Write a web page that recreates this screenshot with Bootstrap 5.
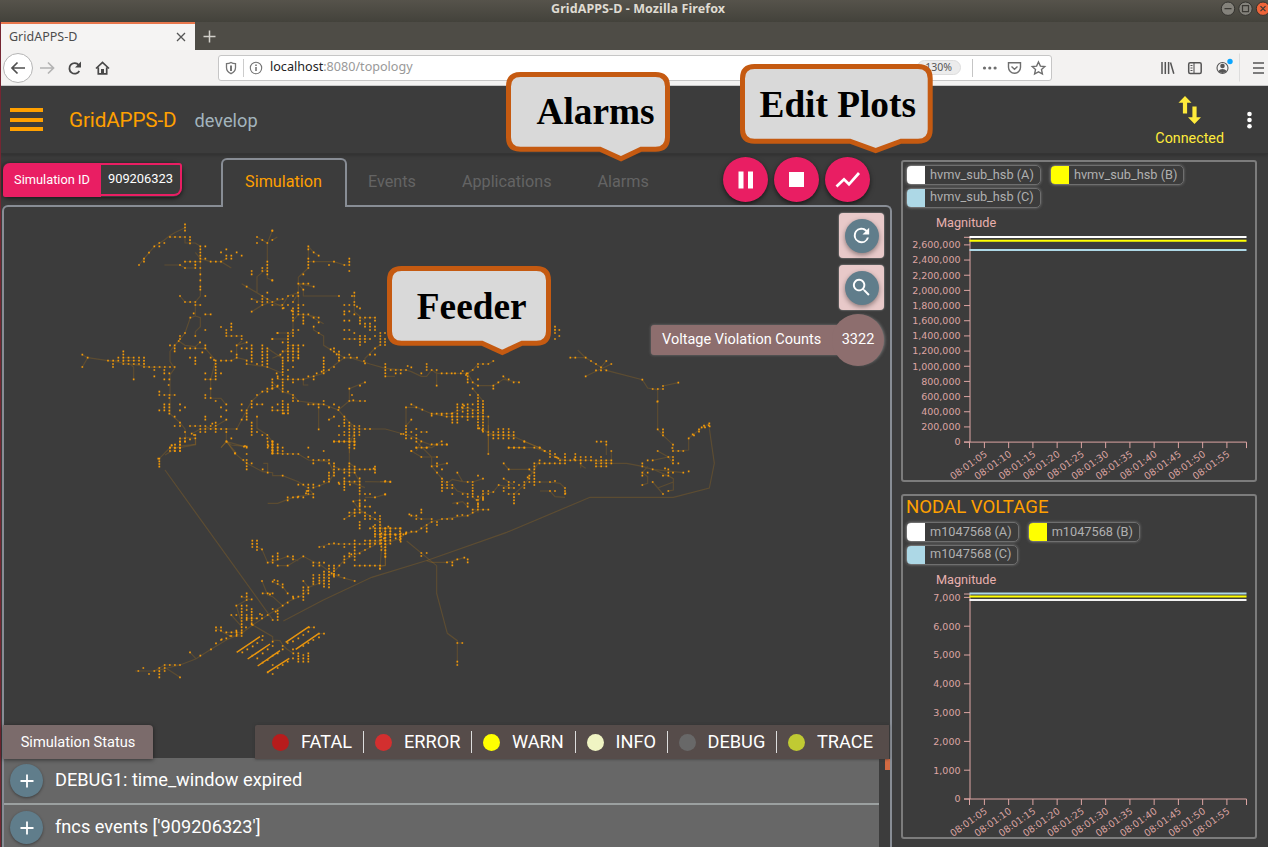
<!DOCTYPE html>
<html lang="en">
<head>
<meta charset="utf-8">
<title>GridAPPS-D</title>
<link rel="stylesheet" href="https://cdn.jsdelivr.net/npm/bootstrap@5.3.0/dist/css/bootstrap.min.css">
<style>
body{width:1268px;height:847px;background:#3c3c3c;font-family:Roboto,sans-serif;color:#fff;line-height:1}
svg{display:block}
.chrome{font-family:"Noto Sans",sans-serif}
.titlebar{height:22px;background:linear-gradient(#56534b,#43423b);font-size:12.5px}
.title-text{left:551px;top:3px;font-weight:700;color:#dfdbd2;letter-spacing:.09px;white-space:nowrap}
.tabbar{height:28px;background:#4e4c46}
.fx-tab{width:194px;height:28px;margin-left:1px;background:#f5f4f3;border-top:2px solid #e8774d;color:#4d4d4d;font-size:12.5px;padding:0 8px}
.toolbar{height:36px;background:#f3f2f1;border-bottom:1px solid #c8c8c8;color:#444}
.back-btn{width:30px;height:30px;border:1px solid #b5b5b5;border-radius:50%;background:#fff}
.urlbar{width:834px;height:26px;background:#fff;border:1px solid #c6c6c6;border-radius:3px;font-size:12.6px}
.zoom-pill{background:#ececec;border:1px solid #ddd;border-radius:8px;font-size:10.5px;height:15px;width:44px;color:#555}
.app-head{height:68px;border-bottom:1px solid #343434;box-shadow:0 1px 4px rgba(0,0,0,.25)}
.burger{height:22.5px;margin-left:10px}
.burger span{display:block;height:4px;width:33px;background:#ffa000}
.brand-name{font-size:20.7px;color:#ffa000;letter-spacing:-.15px;margin-left:26px;padding-top:2px}
.branch{font-size:18.2px;color:#a3b4bd;margin-left:18px;padding-top:3px}
.simid{height:34px;margin:9px 0 0 3px;border-radius:5px 9px 9px 5px;box-shadow:0 1px 5px rgba(0,0,0,.7);font-size:12.8px}
.simid-label{width:98px;background:#e91e63;border-radius:7px 0 0 2px}
.simid-val{width:81px;height:33px;border:2px solid #e91e63;border-left:0;border-radius:0 3px 8px 0;background:#3c3c3c;font-size:12.9px}
.tab-strip{height:51px}
.main-tab{width:126px;height:49px;border:2px solid #888d95;border-bottom:0;border-radius:6px 6px 0 0;background:#3c3c3c;color:#ffa000;left:220.5px;z-index:2;margin-bottom:-2px;padding-bottom:2px}
.tab-item{font-size:16.2px}
.muted-tab{color:#646464}
.fab{width:45px;height:45px;border-radius:50%;background:#e91e63;box-shadow:0 2px 5px rgba(0,0,0,.6)}
.panel-main{width:890px;margin-left:2px;border:2px solid #888d95;border-bottom:0;border-radius:6px 6px 0 0}
.sq{width:45px;height:45px;background:#e8c9c9;border-radius:4px;box-shadow:0 0 2px #aaa}
.sq>span{width:34px;height:34px;border-radius:50%;background:#607d8b;box-shadow:0 2px 5px rgba(0,0,0,.4)}
.vv-label{width:200px;height:30px;background:#8d6e6e;border-radius:3px;font-size:14.5px;box-shadow:0 0 3px #777;padding-left:11px}
.vv-count{width:52px;height:52px;background:#8d6e6e;border-radius:50%;font-size:14.5px;box-shadow:2px 0 3px -1px #777}
.status-tab{width:150px;height:34px;background:#7b6b6b;border-radius:0 4px 0 0;font-size:14.6px;box-shadow:0 1px 4px rgba(0,0,0,.5)}
.legend-bar{width:634px;height:34px;background:#564c4a;font-size:18.2px;padding-left:17px;border-radius:2px 0 0 0;box-shadow:0 0 3px #333}
.lvl{height:22px}
.lvl+.lvl{border-left:1px solid #ddd}
.lvl i{display:block;width:17px;height:17px;border-radius:50%}
.log-list{width:875px;margin-top:-1px;background:#676767;font-size:18.2px;height:90px}
.log-row{height:47px;border-bottom:2px solid #9ba0a0;padding-left:6px}
.log-row span{width:33px;height:33px;border-radius:50%;background:#607d8b;box-shadow:0 1px 3px rgba(0,0,0,.4)}
.plot-card{width:356px;border:2px solid #7c7c7c;border-radius:3px;padding:3px 4px 0 3px}
.chip{height:20px;border:1.5px solid #6f6f6f;border-radius:5px;font-size:12.75px;color:#b0b0b0;overflow:hidden;box-shadow:0 0 3px #777;margin-bottom:2.7px}
.chip i{width:18px;height:20px;margin-right:5px}
.plot-title{font-size:18.6px;color:#ffa000;height:21px;margin-top:-1px}
.axis text{font:9.5px "DejaVu Sans",sans-serif;fill:#dda5a3}
.axis path{stroke:#dda5a3;fill:none;stroke-width:1}
.overlay{left:0;top:0;pointer-events:none}
.callout path{fill:#d9d9d9;stroke:#c55a11;stroke-width:5;stroke-linejoin:miter}
.callout text{font:700 37.3px "Liberation Serif",serif;fill:#000}
</style>
</head>
<body class="overflow-hidden position-relative d-flex flex-column">
<div class="chrome">
 <div class="titlebar position-relative">
  <span class="title-text position-absolute">GridAPPS-D - Mozilla Firefox</span>
  <svg class="position-absolute end-0 top-0" width="50" height="22" viewBox="1218 0 50 22"><g stroke="#33322e"><circle cx="1228" cy="8.700" r="6.700" fill="#84827b"/><circle cx="1245.500" cy="8.700" r="6.700" fill="#84827b"/><circle cx="1263" cy="8.700" r="6.700" fill="#ee6439"/></g><path d="M1224.500 8.700h7M1242.500 5.700h6v6h-6zM1260.500 6.200l5 5m0-5l-5 5" stroke="#3b3934" fill="none" stroke-width="1.200"/></svg>
 </div>
 <div class="tabbar d-flex align-items-center">
  <div class="fx-tab d-flex align-items-center justify-content-between"><span>GridAPPS-D</span><svg width="12" height="12" viewBox="0 0 12 12"><path d="M2 2l8 8m0-8l-8 8" stroke="#555" stroke-width="1.300"/></svg></div>
  <svg class="ms-2" width="13" height="13" viewBox="0 0 13 13"><path d="M6.500.5v12M.5 6.500h12" stroke="#d2d0ca" stroke-width="1.500"/></svg>
 </div>
 <div class="toolbar d-flex align-items-center position-relative">
  <div class="back-btn d-flex align-items-center justify-content-center flex-shrink-0" style="margin-left:3px"><svg width="16" height="14" viewBox="0 0 16 14"><path d="M15 7H2m5.500-5.500L2 7l5.500 5.500" fill="none" stroke="#505050" stroke-width="1.700"/></svg></div>
  <svg width="185" height="34" viewBox="33 51 185 34" fill="none" class="flex-shrink-0"><path d="M40 68h13m-5-5.500l5.500 5.500-5.500 5.500" stroke="#b3b3b3" stroke-width="1.700"/><path d="M79.300 71a5.300 5.300 0 1 1-.5-6" stroke="#484848" stroke-width="1.800"/><path d="M81 61.500v6h-6z" fill="#484848"/><path d="M96 68.500l6.500-6.200 6.500 6.200M98.300 67.500v6.300h8.400v-6.300" stroke="#484848" stroke-width="1.700"/><path d="M101 74v-5h3v5z" fill="#484848"/></svg>
  <div class="urlbar d-flex align-items-center flex-shrink-0">
   <svg width="51" height="24" viewBox="219 56 51 24" fill="none" stroke="#757575" stroke-width="1.300"><path d="M231 62.500c1.500 1 3 1.200 4.500 1.200v4c0 3-2 4.800-4.500 6-2.500-1.200-4.500-3-4.500-6v-4c1.500 0 3-.2 4.500-1.200z"/><path d="M231 65.500v5.500" stroke-width="2"/><path d="M243.500 59v18" stroke="#ccc" stroke-width="1"/><circle cx="256" cy="68" r="5.700" stroke-width="1.100"/><path d="M256 67v4M256 64.500v1.400" stroke-width="1.600"/></svg>
   <span style="color:#222">localhost</span><span style="color:#999">:8080/topology</span>
   <span class="zoom-pill d-flex align-items-center justify-content-end pe-2 ms-auto">130%</span>
   <svg width="90" height="24" viewBox="961 56 90 24" fill="none" stroke="#6e6e6e" stroke-width="1.400"><path d="M972.500 59v18" stroke="#c5c5c5" stroke-width="1"/><g fill="#6e6e6e" stroke="none"><circle cx="984.500" cy="68" r="1.600"/><circle cx="989.800" cy="68" r="1.600"/><circle cx="995.100" cy="68" r="1.600"/></g><path d="M1008.500 62.800h12v4.500a6 6 0 0 1-12 0zM1011.500 66.500l3 2.700 3-2.700"/><path d="M1038.500 62l1.900 4.100 4.400.5-3.300 3 .9 4.400-3.900-2.200-3.900 2.200.9-4.400-3.300-3 4.400-.5z"/></svg>
  </div>
  <svg class="ms-auto" width="110" height="34" viewBox="1158 51 110 34" fill="none" stroke="#555" stroke-width="1.500"><path d="M1162 62v12M1165.300 62v12M1168.600 62v12M1170.500 62.500l3.300 11.300"/><rect x="1188.700" y="62.700" width="12.500" height="10.800" rx="1.500"/><path d="M1194 62v11M1190.500 65.500h2M1190.500 68h2M1190.500 70.500h2" stroke-width="1.100"/><circle cx="1222.500" cy="68" r="5.500" stroke-width="1.100"/><circle cx="1222.500" cy="66" r="2.300" fill="#555" stroke="none"/><path d="M1218.500 71c1.500-2.700 6.500-2.700 8 0-1.500 2.500-6.500 2.500-8 0z" fill="#555" stroke="none"/><circle cx="1230" cy="61.500" r="2.700" fill="#0aa5ff" stroke="none"/><path d="M1239.500 53.500v28" stroke="#ddd" stroke-width="1"/><path d="M1253 63h11M1253 68h11M1253 73h11"/></svg>
 </div>
</div>

<header class="app-head d-flex align-items-center flex-shrink-0">
 <div class="burger d-flex flex-column justify-content-between"><span></span><span></span><span></span></div>
 <div class="brand-name">GridAPPS-D</div>
 <div class="branch">develop</div>
 <div class="ms-auto d-flex flex-column align-items-center" style="color:#ffeb3b;font-size:14.300px;padding-top:2px">
  <svg width="24" height="30" viewBox="1177 96 24 30" fill="#ffeb3b"><path d="M1184 97l6.500 6.700h-4.400v10.700h-4.200v-10.700h-4.400zM1193.500 125l6.500-6.700h-4.400v-10.700h-4.200v10.700h-4.400z"/></svg>
  <span style="margin-top:6px">Connected</span>
 </div>
 <svg width="44" height="30" viewBox="1224 105 44 30" fill="#fff"><circle cx="1249.500" cy="114" r="2.300"/><circle cx="1249.500" cy="120" r="2.300"/><circle cx="1249.500" cy="126.200" r="2.300"/></svg>
</header>

<div class="d-flex flex-grow-1">
 <main class="d-flex flex-column" style="width:892px">
  <div class="tab-strip d-flex position-relative flex-shrink-0">
   <div class="simid d-flex"><div class="simid-label d-flex align-items-center justify-content-center">Simulation ID</div><div class="simid-val d-flex align-items-center justify-content-center">909206323</div></div>
   <div class="main-tab tab-item d-flex align-items-center justify-content-center position-absolute bottom-0">Simulation</div>
   <div class="tab-item muted-tab d-flex align-items-center" style="margin-left:186px;gap:46px;padding-top:5px"><span>Events</span><span>Applications</span><span>Alarms</span></div>
   <div class="d-flex ms-auto" style="gap:6px;margin-right:22px;padding-top:3px">
    <div class="fab d-flex align-items-center justify-content-center"><svg width="16" height="18" viewBox="0 0 16 18"><path d="M.5.5h5v17h-5zM10 .5h5v17h-5z" fill="#fff"/></svg></div>
    <div class="fab d-flex align-items-center justify-content-center"><svg width="16" height="16"><rect width="15" height="15" fill="#fff"/></svg></div>
    <div class="fab d-flex align-items-center justify-content-center"><svg width="26" height="18" viewBox="0 0 26 18"><path d="M1.500 15.500l7.500-7.200 5 5L24 2" stroke="#fff" stroke-width="2.700" fill="none"/></svg></div>
   </div>
  </div>
  <section class="panel-main flex-grow-1 d-flex flex-column position-relative">
   <div class="d-flex flex-column align-items-end" style="height:518px;padding:6px 6px 0;gap:7px">
    <div class="sq d-flex align-items-center justify-content-center"><span class="d-flex align-items-center justify-content-center"><svg width="23" height="23" viewBox="0 0 24 24"><path fill="#fff" d="M17.650 6.350A8 8 0 1 0 19.730 14h-2.080A6 6 0 1 1 12 6c1.660 0 3.140.69 4.220 1.780L13 11h7V4z"/></svg></span></div>
    <div class="sq d-flex align-items-center justify-content-center"><span class="d-flex align-items-center justify-content-center"><svg width="23" height="23" viewBox="0 0 24 24"><path fill="#fff" d="M15.500 14h-.79l-.28-.27A6.500 6.500 0 1 0 13.730 14.430l.27.280v.79l5 4.990L20.490 19zM9.500 14a4.500 4.500 0 1 1 0-9 4.500 4.500 0 0 1 0 9z"/></svg></span></div>
    <div class="d-flex align-items-center" style="margin-top:-3px"><div class="vv-label d-flex align-items-center">Voltage Violation Counts</div><div class="vv-count d-flex align-items-center justify-content-center" style="margin-left:-19px">3322</div></div>
   </div>
   <div class="d-flex justify-content-between" style="margin-left:-1px;padding-right:1px;z-index:1"><div class="status-tab d-flex align-items-center justify-content-center">Simulation Status</div>
    <div class="legend-bar d-flex align-items-center" id="levels"></div></div>
   <div class="d-flex"><div class="log-list">
    <div class="log-row d-flex align-items-center"><span class="d-flex align-items-center justify-content-center"><svg width="14" height="14"><path d="M7 .5v13M.5 7h13" stroke="#fff" stroke-width="1.800"/></svg></span><div style="margin-left:12px">DEBUG1: time_window expired</div></div>
    <div class="log-row d-flex align-items-center"><span class="d-flex align-items-center justify-content-center"><svg width="14" height="14"><path d="M7 .5v13M.5 7h13" stroke="#fff" stroke-width="1.800"/></svg></span><div style="margin-left:12px">fncs events ['909206323']</div></div>
   </div><div class="ms-auto" style="width:5px;height:11px;background:#d26a42"></div></div>
  </section>
 </main>
 <aside style="margin-left:9px;padding-top:6px">
  <div class="plot-card" style="height:322px">
   <div class="d-flex flex-wrap chips" data-name="hvmv_sub_hsb"></div>
   <svg id="plot1" class="axis overflow-visible" width="343" height="270" viewBox="906 210 343 270"></svg>
  </div>
  <div class="plot-card" style="height:345px;margin-top:12px">
   <div class="plot-title">NODAL VOLTAGE</div>
   <div class="d-flex flex-wrap chips" style="margin-top:3px" data-name="m1047568"></div>
   <svg id="plot2" class="axis overflow-visible" width="343" height="270" viewBox="906 567 343 270"></svg>
  </div>
 </aside>
</div>

<svg class="overlay position-absolute" width="1268" height="847" viewBox="0 0 1268 847">
 <path d="M.5 22v825" stroke="#752632"/>
 <g id="feeder" fill="none"></g>
 <g class="callout">
  <path d="M520.500 74.500h135q12 0 12 12v50.700q0 12-12 12H641L621 158.700 600 149.200h-79.500q-12 0-12-12V86.500q0-12 12-12z"/><text x="536.500" y="124">Alarms</text>
  <path d="M754.500 66.500H918q12.200 0 12.200 12v50.700q0 12-12.200 12H901L875.700 150.500 850 141.200h-95.500q-12 0-12-12V78.500q0-12 12-12z"/><text x="759.500" y="117">Edit Plots</text>
  <path d="M401.500 268.500h135q12 0 12 12v50.700q0 12-12 12H522L502.300 352.500 482 343.200h-80.500q-12 0-12-12V280.500q0-12 12-12z"/><text x="416.800" y="318.700">Feeder</text>
 </g>
</svg>

<script src="https://cdn.jsdelivr.net/npm/bootstrap@5.3.0/dist/js/bootstrap.bundle.min.js"></script>
<script>
// Log level legend: name, colour, cell width
document.getElementById('levels').innerHTML=[['FATAL','#b71c1c',91],['ERROR','#d32f2f',108],['WARN','#ffff00',103.500],['INFO','#f0f4c3',92],['DEBUG','#686868',109.500],['TRACE','#c0ca33',110]]
 .map(([n,c,w],i)=>`<div class="lvl d-flex align-items-center" style="width:${w}px;padding-left:${i?11:0}px"><i style="background:${c}"></i><span style="margin-left:12px">${n}</span></div>`).join('');
document.querySelectorAll('.chips').forEach(el=>{
 el.innerHTML=[['A','#fff'],['B','#ff0'],['C','#add8e6']].map(([p,c])=>`<div class="chip d-flex align-items-center" style="padding-right:6px;margin-right:9px"><i style="background:${c}"></i>${el.dataset.name} (${p})</div>`).join('');
});
// Time series plots
function plot(id,top,zero,step,inc,count,lines){
 let s=`<text x="936" y="${top-10}" style="font:12.7px Roboto;fill:#e8b0ae">Magnitude</text>`;
 let p=`M964 ${top}h6V${zero}M964 ${zero}H1246.500v6M969.500 ${zero}v6`;
 for(let i=0;i<=count;i++){const y=zero-i*step;s+=`<text x="960.500" y="${y+3.300}" text-anchor="end">${(i*inc).toLocaleString('en-US')}</text>`;p+=`M964 ${y}h6`}
 for(let i=0;i<11;i++){const x=984.400+i*24.250;p+=`M${x} ${zero}v6`;s+=`<text transform="translate(${x+3.500} ${zero+13.500}) rotate(-35)" text-anchor="end">08:01:${String(5+i*5).padStart(2,'0')}</text>`}
 s+=`<path d="${p}"/>`;
 lines.forEach(([y,c])=>s+=`<path d="M969.500 ${y}H1246.500" style="stroke:${c};stroke-width:2"/>`);
 document.getElementById(id).innerHTML=s;
}
plot('plot1',237.300,442.100,15.170,200000,13,[[237,'#fff'],[240.700,'#ff0'],[250,'#add8e6']]);
plot('plot2',594,799,28.800,1000,7,[[593.500,'#add8e6'],[596.500,'#ff0'],[600,'#f2f2f2']]);

// Feeder topology. Nodes: "x,y", a horizontal run "x1-x2,y" or a vertical run "x,y1-y2"; wires are polylines.
const sections=[
{o:[70,215],
n:`345,28-47 300-345,66 360,66-85 283,84 253,94 268,94 268,84 237,113 222,131-140 207,150 391,94-131 406,94 406,131 345-391,140 376,140-159 345,159 330,150 422-453,140 391,159 391,178 391,196 391,215 391,224 469,103 453,112 469,122 484,122 469,131 484,131 500,112 515,122 330,243 406,243 345-376,261 376-391,270 371,295 361,308 406-422,298 406,345 376,363 345,354 330,363-372 326,378 300,391 314,391-409 345-376,400 390,382 406,391-400 397,412 360,428 376,428-447 422,428 432,435 453,336 484,326-345 469,345-363 469-515,363 515,372 530,382 500,391 484,409 500,419-428 453-484,437 515,400 530,400 437,437-493 453,475 406,475 406-437,493 422,521 406,540-549 422,549 437,558 453,577 469,568 469,586 453,605 469,614 406,605-614
37,419 53,428 37,456 114-145,437 129,447-456 160,409-447 145,428 160-191,428 207,428 222,428-456 160-207,437 160-207,447 222-300,456 253,465 283,465-475 314,456 253,484 283,493 298,493 191,493 298,475 296,510 268,530-540 283-314,540 298,549 283,568-586 298,568-596 268,586 330,568 345,577 330,586 314,605 330,623-633 314,633 360-391,633 345,651 365,656 372,660 345,670 376,660-670 330,670-708 314,698-708 300,698-708 305,691 345,679 360,673 391,642-651 406,633-651 422,633 437,623-651 427,626 422-469,642 469,651 500,642 469,679 484,670 515,568 515,586 530,586-614 515,614 545,558-577 561,540 561-577,568 577,530 592,521-530 607,520 622,515
607,47 561,66 577,75 561,84 592,84 592,140-178 577,159-168 545,168-178 607,196 530,215 592,233 577,243-270 545,252 592,252-261 545,290 561,261 607,261 622,252 637,270 641,279 545,391-440 577,391-450 592,400-456 530,447 561,447 530,437 622,354 607,372 545,623-660 561,605 561,651 577,660 592,660 595,693 592,670 607,680-715 530,695 522,695 495,715`,
w:`345,28 345,38 314,53 298,63 283,75 253,94 222,131 207,150|345,66 345,84 376,84 391,94 391,243 376,261 376,303 361,308 345,354 326,378 314,391 300,409 300,440 314,460 300,480 300,596 330,623 345,642 347,668 330,672|283,150 330,150 345,159 376,159|376,112 391,131 422,140 453,140 484,159|453,140 469,131|330,243 345,261|376,303 391,308 391,335 376,350 376,363|326,378 345,391 376,395 390,382|376,400 406,400 437,437 422,493 422,549 453,550 469,570|484,437 500,428 500,391 530,382|500,391 515,378|500,428 530,435 530,447 592,456 637,475|37,419 53,428 114,437 180,447 191,456 191,493|180,447 245,457 300,456|37,456 53,428|330,623 345,642|347,668 376,670 376,688 330,693 285,720|365,656 391,642 484,642 500,642 515,614 530,586 545,558 577,530 622,515|469,642 469,679 484,690 530,695|453,698 469,679 500,715|406,633 422,642 469,614|561,605 561,640 592,660 607,680 607,715|607,47 592,84 592,190 607,196|561,66 592,84|592,160 561,185 561,233 515,206|530,215 577,243 607,261 637,275|545,290 577,270 607,261 637,252|622,66 607,75|622,354 655,354|607,372 655,372|592,400 637,430|545,252 577,261`},
{o:[270,215],
n:`7,47 7,75 7,196 115,94-103 131,112 146,122 115,131-159 131,140 177,150 192,140 223,150 238,131-150 238,168 100,178 85-115,206 131,215 100,224 84,233 54,243 38,252 207,243 69,243 85,243 85,270-298 38,280 7,270 54,270 69,261 69,280-298 69,308-317 100,270 100,298-326 115,298 146,308 131,308 131,335 146,354 65,287 146,322 253,233-243 253,261-270 246,243 261,275 270,280 223,270 223,289-298 223,317 238,270 238,289 238,317 253,298 270,308-326 285-315,308 285,326-335 300,326-335 315,317 315,335-345 331,354-390 345,354 345,372-390 315,363 223,345 223,372 238,345 270,363-390 285,363-381 223-300,372 253,354 315,400 315,419 300,345 7,372 23,354 54,354-437 69,345-363 69,391-437 85,345 85,391-430 38,382 100,391 38-85,409 69-85,428 54-85,391 31,419 38,428-480 69,456 54,465 20,475 7,493 23,484 38-100,493 69,502 54,484 115,484 131,493 131,484 140,475 155,470 161,428-475 161,466 177,465 192,456 207,437 182,403 192,400-410 200,418 207,410-437 223-261,428 238,419 282,438 285,445 300,419
346,447-484 362-408,465 377,475 392,475 413,453 424,457 454,475 470,447-465 485,465 500,465 500,512 515-545,475 555-590,475 578,468 588,480 593,475-502 608,465 624,447-456 639,447 655,447 670,438 700,484 716,493 731,502 747,502 685,502 670,512-521 624,493 624,512 608,521 600,540 608,502 624,540 7,502-521 23,512 38,502-530 23,490 54,530 69,540-558 84,558 115-161,568 146,577 146,643 161,558 177,577 192,568 205,585 207,577 177,614 192,605 238,521 238,558 250,556 285,502 270,512 285,558 270,558 246,540 7,577 7-54,586 38,558-595 54,568-595 23,568 42,595 223,605-633 238,623-690 253,633-700 268,633-660 285-300,642 207,633 207,660 223,660 192-253,679 223,651 253,661 408,577 424,568 439,577 457,584 485-545,596 500,596 515,600 485,602 424,614 408,633 400,657 393,657 408,642-670 424,651 439,642 439,660 454-470,651 424,670 439,670 454,679 439,698 485-500,688 515,679 530,688 424,708 470,698
562,568-605 578,568-590 593,568-615 547,595-623 530-655,605 562,614-623 582,572 608,568 576,577 608,586-595 624,540-640 639,558-650 608,605 655,605 628,640 637,645 655-731,660 639,588 700,642-670 716,642-670 731,651-670 685,642-670 670,651-670 655,651 763,679 716-763,698 809,698 824,708 7,679-715 23,688-715 38,698 115,698 161,708 855,335-354 868,345 855,372 868,363`,
w:`115,94 131,112 146,122|115,103 115,159 85,187 85,206 100,224 100,243 207,243|115,140 192,140 223,150 238,150|85,206 131,215|85,298 115,300 161,326|115,300 146,308|7,270 38,270 54,243 85,233 69,261|85,206 85,298 69,317 69,345 54,363|131,335 131,345 161,363 161,391 192,410 223,428 248,430 300,447 346,460 408,465 424,470 454,484 470,484 485,465 500,475 593,475|285,445 285,430 315,400 331,390|253,233 253,290 285,317|223,428 161,475 100,493 23,493|7,430 31,419 54,400|207,437 207,419|7,502 38,530 69,540 84,558 161,568 205,585 238,623 268,642 346,642 400,657 408,657 408,577 439,577 485,596 530,605 655,605 655,715|146,568 146,643|205,585 238,558 238,521 285,502|238,558 285,558|408,633 424,614|408,657 439,670 454,679 439,708|454,679 485,690|454,698 485,698 515,679|500,465 500,512|593,475 608,465 624,447 655,447 670,438|593,475 608,502 624,512 670,512 700,493 747,502|700,484 716,500|608,521 639,558 639,642 655,655 731,665 809,698 824,708|547,595 593,577 639,595|345,484 375,484|192,679 240,679 238,715|238,623 253,651 238,690|424,568 457,584|177,614 192,605|100,493 100,510 115,510`},
{o:[380,350],
n:`571-586,23 617,23 633,33 648,42 663,52-61 648,61 617,79 679,33 679,61 694,42 787,89 818-849,117 849,108 895,98 832,155 833,154 833,238 849,238-256 879,284 877,294 833,303 879,303 895-910,303 865,321 879,321-340 895,340 818,331 803,331 787,340-349 818,358 787,368-377 787,405 803,368 818,396 849-865,377 865,368 855,355 865,358 879,368 910,368 926,364 865,423 849,432 926,265 938,253 942,256 957,238-245 965,232 972,227 975,232 988,220 986,226 989,229 325,312 386-402,293 433,275 433,293 463-479,293 494,303 510,303-321 525,312-321 530,322 463-555,340 479,331 540,331 535,325 510,312 555,312-331 586,312-331 583,328 540-617,331 602,321-340 617,321-331 633,321 633-694,331 648-694,340 648-679,349 650,275 663-679,275 679,284 694,303 663,321 463,349-358 448,358 448,377 443,382 463,368-405 433,396-414 371,340 386,358 371,386 402,396 386,396-405 371-402,414 417,405 371,423 386-417,432 402,432-460 356,405 448,396 479,396 510,396 525,393 555,414-432 556,430 510,423 525,423 494,340 448,386
186,386-423 201,396-405 186-217,414 217,405 171,368 186,358 155,349 171,340-349 201,340 171,321 124,321 94,303 109-140,293 171,284 201,284 186,284 109,275 232,368 263,396 278,396 294,377 309,386 278,405 217,432 248,432 278,432 263,432-441 278,414-440 294,440-470 290,450 309,423-450 325,423-432 340,426 309,445 294,463 232,460 263,460-470 278-325,479 278,488 263,497 247,495 186-217,507 232,497 171,516-525 155,507-516 124,507 109,507 124,479-488 88,493 94,497 109,497 140,525-545 124,535 94-109,545 77,552 79,547 62,550-575 47,554-565 31,535-554 0-62,535 0-31,554 16,535-620 4,550-600 31,581 0,656 124,609 140,609 124,618 201,637 217,637-646 232,628 253,623 263,628-637 15,395 31,395 15,433`,
w:`145,630 380,547 630,442 880,442 988,414 1003,340 988,235|593,0 617,23 663,52 679,61 787,89 803,114 833,120 833,238 849,256 879,284 879,303 926,300 926,265 957,240 988,220|617,79 694,42|633,33 663,52 679,33|849,108 895,98|571,23 617,23|818,331 865,321 879,321|833,303 865,321 879,340|694,340 740,340 787,349 818,358 865,377 880,386 880,420 865,423|803,349 787,368 803,380 803,400 787,405|818,358 910,368|818,396 849,432|833,414 880,396|325,225 325,312|433,275 479,293 525,321 555,331 633,331 694,340|679,275 679,315|694,303 694,340|386,293 463,293 510,310|479,331 463,358 448,382 433,405 402,432 402,460|371,340 386,358 448,358 463,372|463,340 540,340|356,405 402,414|371,386 402,405|448,396 510,396 540,400 555,414|480,423 510,423 525,440 555,442|602,340 602,355|602,345 617,355|94,303 124,321 171,321|109,275 124,290 155,321 155,349 186,386 201,405 217,405 232,423 263,432|232,368 248,395 217,388 201,400|248,395 278,396 309,386|278,414 278,440 294,455|294,480 263,497 186,507 155,515 109,545 77,550 62,565 31,575 4,600 0,656|356,405 340,426 309,430 294,455 294,488|88,493 124,507 155,507|217,460 248,455 263,470|140,293 155,285 201,284|155,349 201,340|0,395 31,395|16,620 16,646 0,650|140,632 155,637 201,637 253,623`},
{o:[120,440],
n:`180,5-33 195,5 165,14-33 150,23 155,16 118,56-80 115,56 320,5 345,40 375,18 380,23 380,42 370,60 380,60-88 395,70 428,88 443,98 488,107 458,5-40 443,5-23 458,33 473,23 488,33-42 503-535,42 565,51 580,60-70 596-627,60 627,70 642,70-107 627,98-125 612,125 598,137 580,134-143 580,162-172 565,134-162 550,134 535,134 560,153 558,160 550,172 535,170 533,172 519,172 503,172-181 656,88 673,88-98 673,115-150 688,70-107 704,80-98 673-765,88 765,80-98 761,86 656,128 658,132 642-704,5 704,14 688,23 690,134 673-719,125 719,115-153 719,162 719,181-218 735,162 796,123 811,126 750,162 765,172 796,163 735,181 735-750,200 700,184 719,196 688-735,218 765,218 704,209-228 673,237 688,228 735,218-237 750,228-237 765,237 780,228-255 719,246-265 750,265 750-811,265 765,265-290 780,255-310 796,265-350 811,265-300 765-840,283 840,265-300 735-811,302 850,283 858,280 826,285 760,260 792,295 805,260 765,255 673-780,312 627,312 642,310 656,312 612,321 598,321 735,330 719,340 750,302-320 704,302-360 688,340-349 673,321 673,349-368 694,343 658,377 704-780,377 780,386 765,311
397,302-321 411,302-330 426,328 458,349-360 473,340-358 443,368 458,368 503,349 519,349-358 473,377 503,377 550,349 580,368 598,368-377 580,377 612,368 627,377-442 642,377-410 635,400 656,405 673,414 704,423 627-656,405 580,405-425 598,405-430 612,395-440 580,432 565,442-460 550,423 550,442-480 535,470 520,475 503,488 488,497 519,470 426,423 458,425 463,420 473,423-432 488,433-442 503,460 428-458,460 450,463 380,460-480 365,470 395,478 349,497 365,497-580 380,497-510 380,525-540 395,507-550 334,525 349,525 380-410,535 420,522 426,525 443,525 458,507 458,540 467,515 473,512-540 411,535 426,535 398,555 395,553 378,562 349,572 319-365,577 334-365,588 350,583 288,562-572 303,562-572 319,595 288,610 303,600 305,598 331,588 273,628 241,647 210,637 134-180,675 55,693 70,684 87,702 103,693 118,684-712 134,675-693 180,712 428,588 567-582,562 597-612,581 535,640-665 550,645-665 565,640-665 520,640 1012-1027,609 1012,665-675
382,628 367,637 398,619 412,609 427,600 397,647 428,640 412,655 443,628 458,618 458,605 428,668 443,660 458,647 473,640 458,675 488,628 488,618 443,697 458,702 473,684 488,675 503,665 519,655 519,628 519,604 535,595 550,585 565,575 550,618 565,609 580,600 597,592 503,609`,
w:`135,90 460,542|490,543 610,480 755,412 925,360|860,303 905,340 950,377 950,460 982,580 1012,602 1012,675|118,56 150,23 180,23 227,14 227,0|303,23 320,5 375,20|320,5 345,40 380,70 428,95 458,98 458,107 488,107 535,125 565,145 580,162 519,172 473,190 443,190|443,98 443,70 430,70|458,40 535,42 565,60 627,65 642,100 627,125 598,137 580,143|642,80 688,98 704,98 719,125 719,180 700,184 719,210 780,245 796,300|688,23 688,70 704,80|735,125 811,126|735,172 765,172 796,163|673,237 704,218|688,125 735,143|598,321 627,312 735,312 780,305|642,395 673,360 704,345 765,315|796,350 796,377 704,377|411,321 426,328 443,368 473,360 503,349 535,363|473,377 503,377 550,349 580,365 598,372 635,400 656,410 704,423|635,400 598,430 565,442 550,465 503,485 488,497 443,525 398,555 365,580 319,600 273,628 227,657 180,675 103,693 45,693|488,497 458,470 443,465 426,423|458,425 488,440 503,460|550,423 565,442|380,460 380,480 349,497 365,550|334,525 365,560|288,565 334,590|210,637 227,655|134,682 180,712|103,693 134,675|398,555 458,590 458,600 480,602 488,615 500,627 520,640|365,470 395,480`,
d:`350,637 420,590|383,657 450,612|413,678 480,632|442,697 508,655|497,607 567,560|527,628 597,580`}];
const line=t=>t.split('|').map(l=>'M'+l.split(' ').join('L')).join('');
document.getElementById('feeder').innerHTML=sections.map(s=>{
 let dots='',runs='';
 s.n.trim().split(/\s+/).forEach(t=>{
  const [x,y]=t.split(',').map(v=>v.split('-').map(Number));
  const k=x[1]?Math.round((x[1]-x[0])/15.450):y[1]?Math.round((y[1]-y[0])/9.300):0;
  for(let i=0;i<=k;i++){const a=x[1]?x[0]+i*(x[1]-x[0])/k:x[0],b=y[1]?y[0]+i*(y[1]-y[0])/k:y[0];dots+=`M${a-2.500} ${b}h5`}
  if(k)runs+=`M${x[0]} ${y[0]}L${x[1]||x[0]} ${y[1]||y[0]}`;
 });
 return `<g transform="translate(${s.o}) scale(.33333)"><path d="${line(s.w)+runs}" stroke="#ffa000" stroke-opacity=".17" stroke-width="3.500"/><path d="${dots}" stroke="#f59b08" stroke-width="5"/>${s.d?`<path d="${line(s.d)}" stroke="#e8950e" stroke-width="4.500"/>`:''}</g>`;
}).join('');
</script>
</body>
</html>
